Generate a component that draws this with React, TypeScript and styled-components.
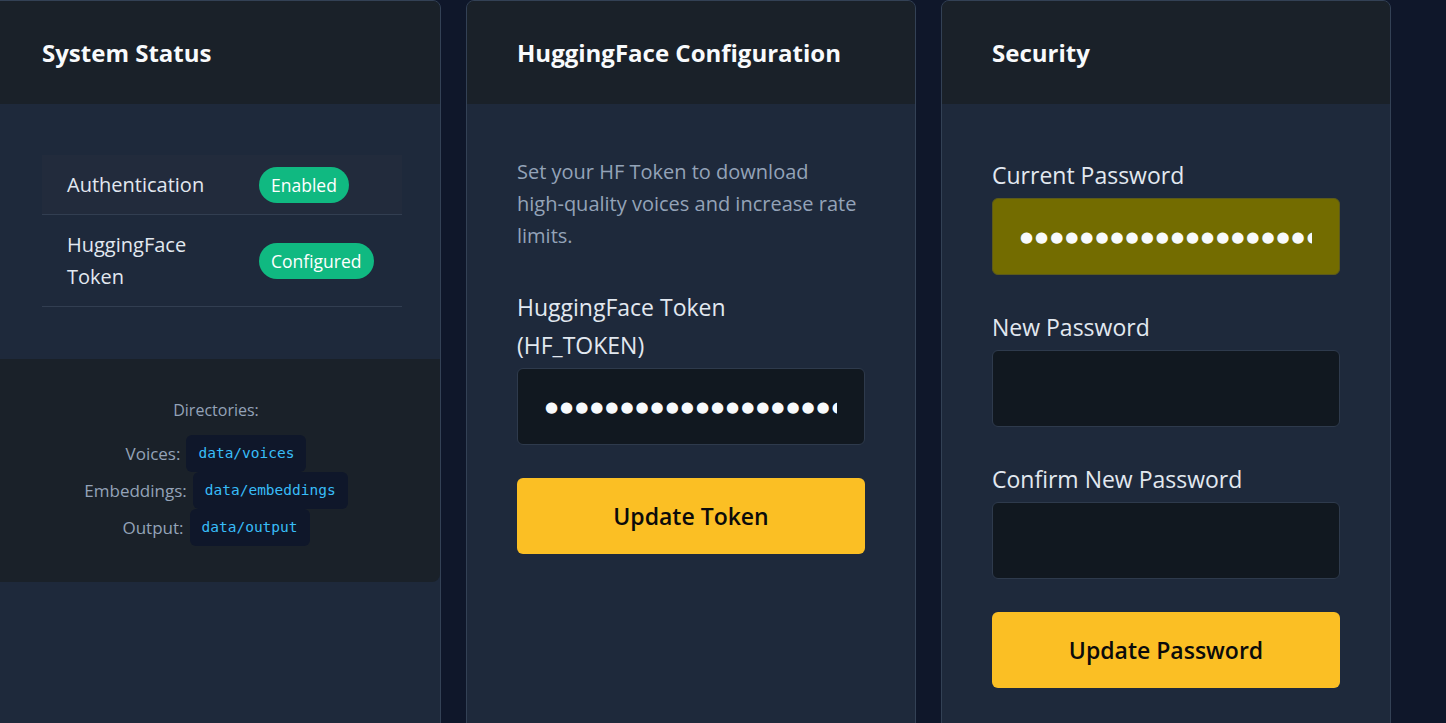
import React from "react";
import styled, { createGlobalStyle } from "styled-components";

const GlobalStyle = createGlobalStyle`
  html, body {
    margin: 0;
    padding: 0;
    background: #0f172a;
    font-family: "Open Sans", "Noto Sans", sans-serif;
    color: #e2e8f0;
    overflow: hidden;
  }
  * {
    box-sizing: border-box;
  }
`;

const Page = styled.div`
  display: grid;
  grid-template-columns: repeat(3, 450px);
  gap: 25px;
  margin-left: -9px;
  align-items: stretch;
`;

const Card = styled.section`
  display: flex;
  flex-direction: column;
  background: #1e293b;
  border: 1px solid #334155;
  border-radius: 8px;
  overflow: hidden;
`;

const CardHeader = styled.header`
  height: 103px;
  display: flex;
  align-items: center;
  padding: 0 50px;
  background: #1a2129;
`;

const Title = styled.h2`
  margin: 0;
  font-size: 24px;
  font-weight: 700;
  line-height: 36px;
  color: #f8fafc;
`;

const CardBody = styled.div`
  padding: 52px 50px;
`;

const StatusTable = styled.table`
  width: 360px;
  margin-top: -1px;
  table-layout: fixed;
  border-collapse: collapse;
`;

const Row = styled.tr<{ $shaded?: boolean }>`
  background: ${(p) => (p.$shaded ? "#222b3c" : "transparent")};
  border-bottom: 1px solid #323e51;
`;

const Cell = styled.td<{ $w: number }>`
  width: ${(p) => p.$w}px;
  padding: 14px 25px 13px;
  font-size: 20px;
  line-height: 32px;
  color: #e2e8f0;
  vertical-align: middle;
`;

const Badge = styled.span`
  padding: 6px 12px;
  line-height: 23px;
  border-radius: 999px;
  background: #10b981;
  color: #ffffff;
  font-size: 17.5px;
  white-space: nowrap;
`;

const CardFooter = styled.div`
  background: #1a2129;
  border-radius: 0 0 8px 8px;
  padding: 39px 20px 36px;
  text-align: center;
`;

const DirTitle = styled.div`
  font-size: 16px;
  line-height: 24px;
  color: #94a3b8;
  margin-bottom: 13px;
`;

const DirRow = styled.div`
  display: flex;
  justify-content: center;
  align-items: center;
  gap: 6px;
`;

const DirLabel = styled.span`
  font-size: 17px;
  color: #94a3b8;
`;

const Code = styled.code`
  display: inline-block;
  padding: 8px 12px;
  line-height: 21px;
  border-radius: 6px;
  background: #0f172a;
  color: #38bdf8;
  font-family: "DejaVu Sans Mono", "Liberation Mono", monospace;
  font-size: 14.5px;
`;

const Description = styled.p`
  margin: 0 0 36px;
  font-size: 20px;
  line-height: 32px;
  color: #94a3b8;
`;

const Field = styled.div`
  display: flex;
  flex-direction: column;
  gap: 4px;
  margin-bottom: 33px;
`;

const Label = styled.label`
  font-size: 23px;
  line-height: 38px;
  color: #e2e8f0;
`;

const Input = styled.input<{ $autofill?: boolean }>`
  width: 100%;
  height: 77px;
  padding: 0 27px;
  border: 1px solid ${(p) => (p.$autofill ? "#5c5a1a" : "#2e3a4c")};
  border-radius: 6px;
  background: ${(p) => (p.$autofill ? "#736c00" : "#111820")};
  color: #f8fafc;
  font-family: "DejaVu Sans", sans-serif;
  font-size: 15px;
  letter-spacing: 2px;
  outline: none;
`;

const Button = styled.button`
  width: 100%;
  height: 76px;
  border: none;
  border-radius: 6px;
  background: #fbbf24;
  color: #0b0b0b;
  font-family: "Open Sans", sans-serif;
  font-size: 23px;
  font-weight: 600;
  cursor: pointer;
`;

const dots = "●".repeat(28);

const directories = [
  { label: "Voices:", path: "data/voices" },
  { label: "Embeddings:", path: "data/embeddings" },
  { label: "Output:", path: "data/output" },
];

const App = () => {
  return (
    <>
      <GlobalStyle />
      <Page>
        <Card>
          <CardHeader>
            <Title>System Status</Title>
          </CardHeader>
          <CardBody>
            <StatusTable>
              <tbody>
                <Row $shaded>
                  <Cell $w={192}>Authentication</Cell>
                  <Cell $w={168}>
                    <Badge>Enabled</Badge>
                  </Cell>
                </Row>
                <Row>
                  <Cell $w={192}>HuggingFace Token</Cell>
                  <Cell $w={168}>
                    <Badge>Configured</Badge>
                  </Cell>
                </Row>
              </tbody>
            </StatusTable>
          </CardBody>
          <CardFooter>
            <DirTitle>Directories:</DirTitle>
            {directories.map((d) => (
              <DirRow key={d.path}>
                <DirLabel>{d.label}</DirLabel>
                <Code>{d.path}</Code>
              </DirRow>
            ))}
          </CardFooter>
        </Card>

        <Card>
          <CardHeader>
            <Title>HuggingFace Configuration</Title>
          </CardHeader>
          <CardBody>
            <Description>
              Set your HF Token to download high‑quality voices and increase rate limits.
            </Description>
            <Field>
              <Label>
                HuggingFace Token
                <br />
                (HF_TOKEN)
              </Label>
              <Input type="text" readOnly value={dots} />
            </Field>
            <Button>Update Token</Button>
          </CardBody>
        </Card>

        <Card>
          <CardHeader>
            <Title>Security</Title>
          </CardHeader>
          <CardBody>
            <Field>
              <Label>Current Password</Label>
              <Input type="text" readOnly value={dots} $autofill />
            </Field>
            <Field>
              <Label>New Password</Label>
              <Input type="password" />
            </Field>
            <Field>
              <Label>Confirm New Password</Label>
              <Input type="password" />
            </Field>
            <Button>Update Password</Button>
          </CardBody>
        </Card>
      </Page>
    </>
  );
};

export default App;
